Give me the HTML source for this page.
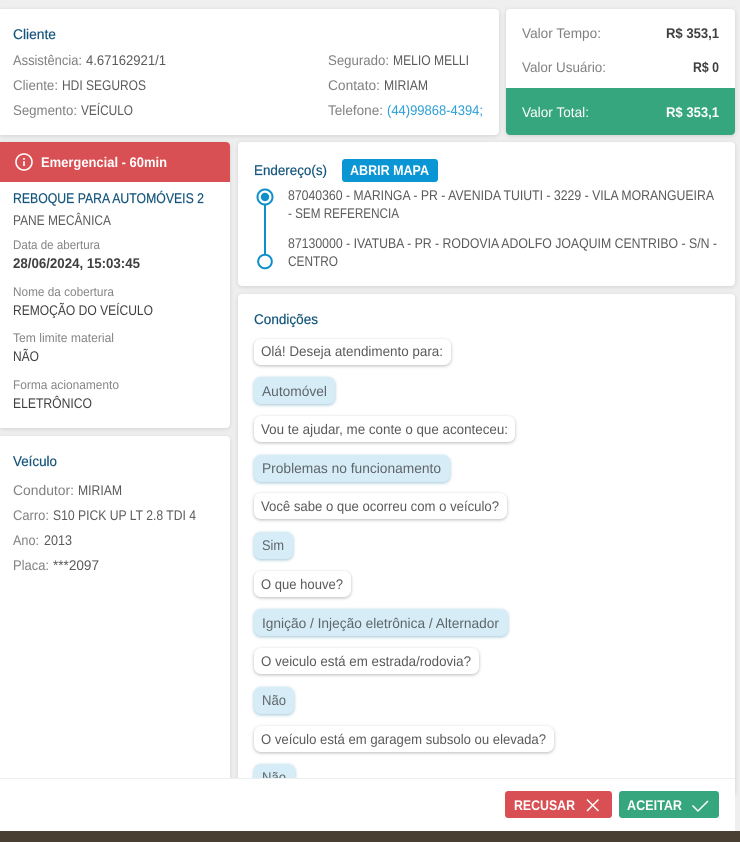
<!DOCTYPE html>
<html lang="pt-BR"><head><meta charset="utf-8"><title>Serviço</title>
<style>
html,body{margin:0;padding:0}
body{width:740px;height:842px;overflow:hidden;position:relative;background:#efefef;font-family:"Liberation Sans",sans-serif}
.c{position:absolute;background:#fff;box-shadow:0 1px 5px rgba(0,0,0,.13)}
.b{position:absolute;left:254px;height:26px;background:#fff;border-radius:7px;box-shadow:0 1px 3px rgba(0,0,0,.28)}
.a{background:#d6edf7;box-shadow:0 1px 3px rgba(40,120,160,.45);height:27px}
svg{position:absolute;left:0;top:0}
text{font-family:"Liberation Sans",sans-serif;font-size:14px;fill:#5a5a5a;white-space:pre;text-rendering:geometricPrecision}
.l{fill:#808080}
.t{fill:#15557c;font-size:14px;stroke:#15557c;stroke-width:.2}
.s{fill:#858585;font-size:12.5px}
.v{fill:#3f3f3f;font-size:14px}
.w{fill:#3f3f3f;font-weight:bold}
.h{fill:#fff;font-weight:bold}
.n{fill:#60656a}
</style></head><body>
<div class="c" style="left:0;top:9px;width:499px;height:126px;border-radius:0 4px 4px 0"></div>
<div class="c" style="left:506px;top:9px;width:229px;height:126px;border-radius:4px;overflow:hidden"><div style="position:absolute;left:0;top:79px;width:229px;height:47px;background:#35a67e"></div></div>
<div class="c" style="left:0;top:142px;width:230px;height:286px;border-radius:0 4px 4px 0;overflow:hidden"><div style="height:40px;background:#d95054"></div></div>
<div class="c" style="left:0;top:436px;width:230px;height:360px;border-radius:0 4px 0 0"></div>
<div class="c" style="left:238px;top:142px;width:497px;height:144px;border-radius:4px"></div>
<div class="c" style="left:238px;top:294px;width:497px;height:500px;border-radius:4px 4px 0 0"></div>
<div style="position:absolute;left:342px;top:159px;width:96px;height:23px;background:#0a95d4;border-radius:3px"></div>

<div class="b" style="top:339px;width:197px"></div>
<div class="b a" style="top:377px;width:81px"></div>
<div class="b" style="top:416px;width:261px"></div>
<div class="b a" style="top:455px;width:196px"></div>
<div class="b" style="top:493px;width:253px"></div>
<div class="b a" style="top:532px;width:39px"></div>
<div class="b" style="top:571px;width:97px"></div>
<div class="b a" style="top:609px;width:254px"></div>
<div class="b" style="top:648px;width:225px"></div>
<div class="b a" style="top:687px;width:40px"></div>
<div class="b" style="top:726px;width:300px"></div>
<div class="b a" style="top:764px;width:41px"></div>

<svg width="740" height="842" viewBox="0 0 740 842">
<text class="t" x="13" y="39" textLength="43" lengthAdjust="spacingAndGlyphs">Cliente</text>
<text class="l" x="13" y="65" textLength="69" lengthAdjust="spacingAndGlyphs">Assistência:</text>
<text x="86" y="65" textLength="80" lengthAdjust="spacingAndGlyphs">4.67162921/1</text>
<text class="l" x="13" y="90" textLength="45" lengthAdjust="spacingAndGlyphs">Cliente:</text>
<text x="62" y="90" textLength="84" lengthAdjust="spacingAndGlyphs">HDI SEGUROS</text>
<text class="l" x="13" y="115" textLength="64" lengthAdjust="spacingAndGlyphs">Segmento:</text>
<text x="81" y="115" textLength="52" lengthAdjust="spacingAndGlyphs">VEÍCULO</text>
<text class="l" x="328" y="65" textLength="61" lengthAdjust="spacingAndGlyphs">Segurado:</text>
<text x="393" y="65" textLength="76" lengthAdjust="spacingAndGlyphs">MELIO MELLI</text>
<text class="l" x="328" y="90" textLength="52" lengthAdjust="spacingAndGlyphs">Contato:</text>
<text x="384" y="90" textLength="44" lengthAdjust="spacingAndGlyphs">MIRIAM</text>
<text class="l" x="328" y="115" textLength="55" lengthAdjust="spacingAndGlyphs">Telefone:</text>
<text x="387" y="115" textLength="96" lengthAdjust="spacingAndGlyphs" style="fill:#2a9fd6">(44)99868-4394;</text>

<text class="l" x="522" y="38" textLength="79" lengthAdjust="spacingAndGlyphs">Valor Tempo:</text>
<text class="w" x="666" y="38" textLength="53" lengthAdjust="spacingAndGlyphs">R$ 353,1</text>
<text class="l" x="522" y="72" textLength="84" lengthAdjust="spacingAndGlyphs">Valor Usuário:</text>
<text class="w" x="693" y="72" textLength="26" lengthAdjust="spacingAndGlyphs">R$ 0</text>
<text x="522" y="117" textLength="67" lengthAdjust="spacingAndGlyphs" style="fill:#fff">Valor Total:</text>
<text class="h" x="666" y="117" textLength="53" lengthAdjust="spacingAndGlyphs">R$ 353,1</text>

<circle cx="24" cy="162" r="8" fill="none" stroke="#fff" stroke-width="1.6"/>
<path d="M24 158v1.8M24 161.2v4.8" stroke="#fff" stroke-width="1.7" fill="none"/>
<text class="h" x="41" y="167" textLength="126" lengthAdjust="spacingAndGlyphs">Emergencial - 60min</text>

<text class="t" x="13" y="203" textLength="191" lengthAdjust="spacingAndGlyphs">REBOQUE PARA AUTOMÓVEIS 2</text>
<text x="13" y="225" textLength="98" lengthAdjust="spacingAndGlyphs">PANE MECÂNICA</text>
<text class="s" x="13" y="249" textLength="87" lengthAdjust="spacingAndGlyphs">Data de abertura</text>
<text class="w" x="13" y="268" textLength="127" lengthAdjust="spacingAndGlyphs">28/06/2024, 15:03:45</text>
<text class="s" x="13" y="296" textLength="101" lengthAdjust="spacingAndGlyphs">Nome da cobertura</text>
<text class="v" x="13" y="315" textLength="140" lengthAdjust="spacingAndGlyphs">REMOÇÃO DO VEÍCULO</text>
<text class="s" x="13" y="342" textLength="101" lengthAdjust="spacingAndGlyphs">Tem limite material</text>
<text class="v" x="13" y="361" textLength="26" lengthAdjust="spacingAndGlyphs">NÃO</text>
<text class="s" x="13" y="389" textLength="106" lengthAdjust="spacingAndGlyphs">Forma acionamento</text>
<text class="v" x="13" y="408" textLength="79" lengthAdjust="spacingAndGlyphs">ELETRÔNICO</text>

<text class="t" x="13" y="466" textLength="44" lengthAdjust="spacingAndGlyphs">Veículo</text>
<text class="l" x="13" y="495" textLength="61" lengthAdjust="spacingAndGlyphs">Condutor:</text>
<text x="78" y="495" textLength="44" lengthAdjust="spacingAndGlyphs">MIRIAM</text>
<text class="l" x="13" y="520" textLength="36" lengthAdjust="spacingAndGlyphs">Carro:</text>
<text x="53" y="520" textLength="143" lengthAdjust="spacingAndGlyphs">S10 PICK UP LT 2.8 TDI 4</text>
<text class="l" x="13" y="545" textLength="26" lengthAdjust="spacingAndGlyphs">Ano:</text>
<text x="44" y="545" textLength="28" lengthAdjust="spacingAndGlyphs">2013</text>
<text class="l" x="13" y="570" textLength="36" lengthAdjust="spacingAndGlyphs">Placa:</text>
<text x="53" y="570" textLength="46" lengthAdjust="spacingAndGlyphs">***2097</text>

<text class="t" x="254" y="175" textLength="73" lengthAdjust="spacingAndGlyphs">Endereço(s)</text>
<text class="h" x="350" y="175" textLength="79" lengthAdjust="spacingAndGlyphs">ABRIR MAPA</text>
<path d="M265 205V255" stroke="#0f8fc9" stroke-width="2"/>
<circle cx="265" cy="197" r="7.5" fill="#fff" stroke="#0f8fc9" stroke-width="2"/>
<circle cx="265" cy="197" r="4.2" fill="#0f8fc9"/>
<circle cx="265" cy="261.5" r="6.8" fill="#fff" stroke="#0f8fc9" stroke-width="2"/>
<text x="288" y="200" textLength="426" lengthAdjust="spacingAndGlyphs">87040360 - MARINGA - PR - AVENIDA TUIUTI - 3229 - VILA MORANGUEIRA</text>
<text x="288" y="218" textLength="111" lengthAdjust="spacingAndGlyphs">- SEM REFERENCIA</text>
<text x="288" y="248" textLength="429" lengthAdjust="spacingAndGlyphs">87130000 - IVATUBA - PR - RODOVIA ADOLFO JOAQUIM CENTRIBO - S/N -</text>
<text x="288" y="266" textLength="50" lengthAdjust="spacingAndGlyphs">CENTRO</text>

<text class="t" x="254" y="324" textLength="64" lengthAdjust="spacingAndGlyphs">Condições</text>
<text x="261" y="356" textLength="182" lengthAdjust="spacingAndGlyphs">Olá! Deseja atendimento para:</text>
<text class="n" x="262" y="396" textLength="65" lengthAdjust="spacingAndGlyphs">Automóvel</text>
<text x="261" y="434" textLength="247" lengthAdjust="spacingAndGlyphs">Vou te ajudar, me conte o que aconteceu:</text>
<text class="n" x="262" y="473" textLength="179" lengthAdjust="spacingAndGlyphs">Problemas no funcionamento</text>
<text x="261" y="511" textLength="238" lengthAdjust="spacingAndGlyphs">Você sabe o que ocorreu com o veículo?</text>
<text class="n" x="262" y="550" textLength="22" lengthAdjust="spacingAndGlyphs">Sim</text>
<text x="261" y="589" textLength="82" lengthAdjust="spacingAndGlyphs">O que houve?</text>
<text class="n" x="262" y="628" textLength="237" lengthAdjust="spacingAndGlyphs">Ignição / Injeção eletrônica / Alternador</text>
<text x="261" y="666" textLength="210" lengthAdjust="spacingAndGlyphs">O veiculo está em estrada/rodovia?</text>
<text class="n" x="262" y="705" textLength="24" lengthAdjust="spacingAndGlyphs">Não</text>
<text x="261" y="744" textLength="285" lengthAdjust="spacingAndGlyphs">O veículo está em garagem subsolo ou elevada?</text>
<text class="n" x="262" y="782" textLength="24" lengthAdjust="spacingAndGlyphs">Não</text>

<rect x="0" y="778" width="735" height="53" fill="#fff"/>
<rect x="0" y="778" width="735" height="1" fill="#eeeeee"/>
<rect x="0" y="831" width="740" height="11" fill="#4a3f33"/>
<rect x="505" y="791" width="107" height="27" rx="3" fill="#d95054"/>
<rect x="619" y="791" width="100" height="27" rx="3" fill="#35a67e"/>
<text class="h" x="514" y="810" textLength="61" lengthAdjust="spacingAndGlyphs">RECUSAR</text>
<path d="M587 799.5L598.5 811M598.5 799.5L587 811" stroke="#fff" stroke-width="1.5" fill="none"/>
<text class="h" x="627" y="810" textLength="55" lengthAdjust="spacingAndGlyphs">ACEITAR</text>
<path d="M692.5 805.5L698 811L708 801" stroke="#fff" stroke-width="1.5" fill="none"/>
</svg>
</body></html>
